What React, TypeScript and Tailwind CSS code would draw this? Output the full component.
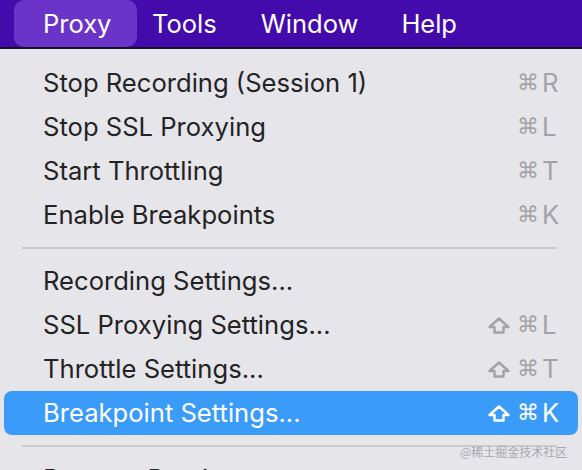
import React from "react";

type Item = { label: string; shift?: boolean; key?: string; active?: boolean };

const group1: Item[] = [
  { label: "Stop Recording (Session 1)", key: "R" },
  { label: "Stop SSL Proxying", key: "L" },
  { label: "Start Throttling", key: "T" },
  { label: "Enable Breakpoints", key: "K" },
];
const group2: Item[] = [
  { label: "Recording Settings..." },
  { label: "SSL Proxying Settings...", shift: true, key: "L" },
  { label: "Throttle Settings...", shift: true, key: "T" },
  { label: "Breakpoint Settings...", shift: true, key: "K", active: true },
];

function ShiftIcon() {
  return (
    <svg width="22" height="17" viewBox="0 0 22 17" className="block">
      <path
        d="M11 1.5 L20.5 10 H15.5 V15.5 H6.5 V10 H1.5 Z"
        fill="none"
        stroke="currentColor"
        strokeWidth="2.4"
        strokeLinejoin="round"
      />
    </svg>
  );
}

function Row({ item }: { item: Item }) {
  const sc = item.active ? "text-white" : "text-[#a3a2a7]";
  return (
    <div
      className={`mx-[4px] h-[44px] flex items-center pl-[39px] pr-[20px] rounded-[8px] ${
        item.active ? "bg-[#3b9bf8] text-white" : "text-[#232323]"
      }`}
    >
      <span className="flex-1 text-[25.6px] leading-none whitespace-nowrap">{item.label}</span>
      {item.key && (
        <span className={`flex items-center text-[25.6px] leading-none ${sc}`}>
          {item.shift && (
            <span className="w-[29px] flex items-center">
              <ShiftIcon />
            </span>
          )}
          <span className="w-[25px] text-left font-['DejaVu_Sans',sans-serif] text-[22px]">⌘</span>
          <span className="w-[16px] text-left">{item.key}</span>
        </span>
      )}
    </div>
  );
}

function Sep() {
  return (
    <div className="h-[22px] pt-[10px] px-[22px]">
      <div className="h-[2px] bg-[#cac9ce] mr-[3px]" />
    </div>
  );
}

export default function App() {
  return (
    <div className="w-[582px] h-[470px] overflow-hidden relative bg-[#e6e5ea] font-['Inter',sans-serif]">
      <div className="h-[47px] bg-[#430bab] flex items-center text-white text-[25.5px] leading-none">
        <div className="ml-[14px] h-[47px] w-[123px] rounded-[10px] bg-[#6b34c9] flex items-center pl-[29px]">
          Proxy
        </div>
        <span className="ml-[15px]">Tools</span>
        <span className="ml-[44px]">Window</span>
        <span className="ml-[43px]">Help</span>
      </div>
      <div className="h-[2px] bg-[#16102a]" />
      <div className="pt-[12px]">
        {group1.map((i) => (
          <Row key={i.label} item={i} />
        ))}
        <Sep />
        {group2.map((i) => (
          <Row key={i.label} item={i} />
        ))}
        <Sep />
        <Row item={{ label: "Reverse Proxies..." }} />
      </div>
      <div className="absolute left-[460px] top-[446px] text-[12px] leading-none text-[#a9a8ad] font-['Noto_Sans_CJK_SC',sans-serif]">
        @稀土掘金技术社区
      </div>
    </div>
  );
}
